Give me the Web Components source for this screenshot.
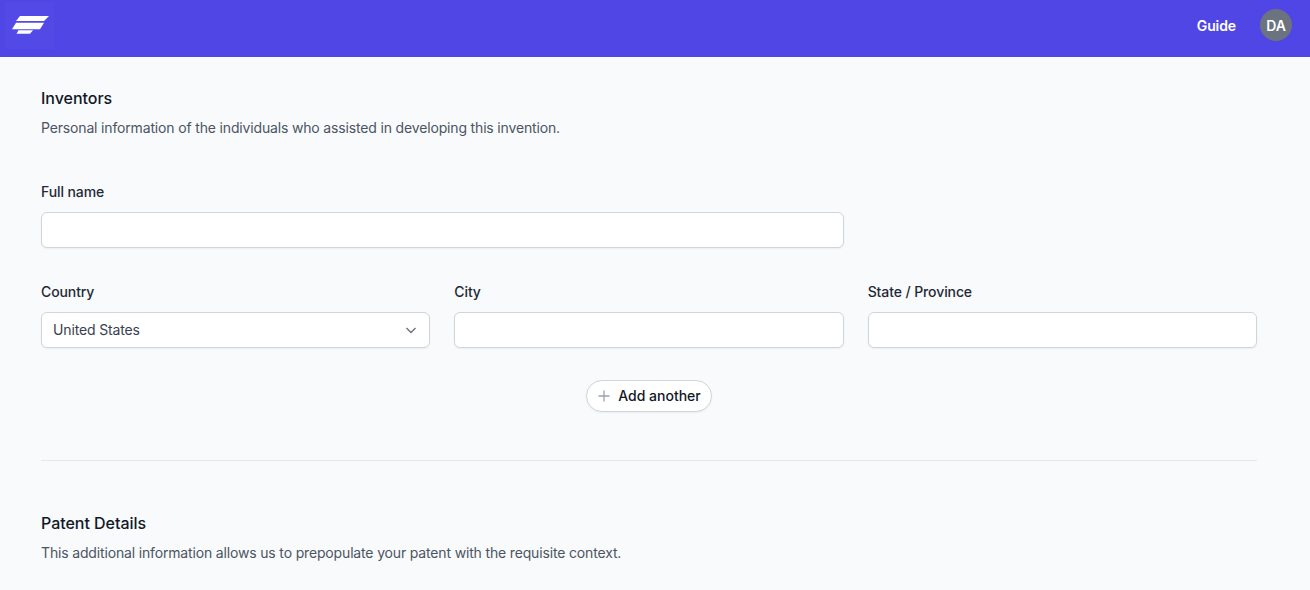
<!DOCTYPE html>
<html>
<head>
<meta charset="utf-8">
<style>
html, body { margin: 0; padding: 0; height: 100%; overflow: hidden; background: #f9fafb; font-family: Inter, "Liberation Sans", sans-serif; }
</style>
</head>
<body>
<app-header></app-header>
<main-area>
    <form-section heading="Inventors" text="Personal information of the individuals who assisted in developing this invention.">
        <form-grid>
            <form-field label="Full name" style="grid-column: span 2"></form-field>
            <span></span>
            <form-field label="Country" value="United States" select></form-field>
            <form-field label="City"></form-field>
            <form-field label="State / Province"></form-field>
        </form-grid>
        <add-button>Add another</add-button>
    </form-section>
    <form-section divided heading="Patent Details" text="This additional information allows us to prepopulate your patent with the requisite context."></form-section>
</main-area>

<script>
class AppHeader extends HTMLElement {
    constructor() {
        super();
        this.attachShadow({ mode: 'open' });
    }
    connectedCallback() {
        this.shadowRoot.innerHTML = `
            <style>
                :host {
                    display: flex;
                    align-items: flex-start;
                    justify-content: space-between;
                    height: 57px;
                    background: #4f46e5;
                    padding: 2px 18px 0 5px;
                    box-sizing: border-box;
                }
                .logo {
                    display: flex;
                    width: 49px;
                    height: 47px;
                    background: #5249e6;
                }
                .right { display: flex; align-items: center; gap: 24px; margin-top: 7px; }
                a { color: #fff; font-size: 14px; font-weight: 600; letter-spacing: -0.1px; text-decoration: none; }
                .avatar {
                    width: 32px;
                    height: 32px;
                    border-radius: 50%;
                    background: #6b7280;
                    color: #fff;
                    font-size: 14px;
                    font-weight: 600;
                    display: flex;
                    align-items: center;
                    justify-content: center;
                }
            </style>
            <div class="logo">
                <svg width="49" height="47" viewBox="0 0 49 47">
                    <polygon fill="#fff" points="15,14 44,14 39,19 11,19"/>
                    <polygon fill="#fff" points="11,20.700 39,20.700 35,27.300 7,27.300"/>
                    <polygon fill="#fff" points="13.500,28.300 28,28.300 25,31.700 11.500,31.700"/>
                </svg>
            </div>
            <div class="right">
                <a href="#guide">Guide</a>
                <div class="avatar">DA</div>
            </div>
        `;
    }
}

class MainArea extends HTMLElement {
    constructor() {
        super();
        this.attachShadow({ mode: 'open' });
    }
    connectedCallback() {
        this.shadowRoot.innerHTML = `
            <style>
                :host { display: block; padding: 32px 53px 0 41px; }
            </style>
            <slot></slot>
        `;
    }
}

class FormSection extends HTMLElement {
    constructor() {
        super();
        this.attachShadow({ mode: 'open' });
    }
    connectedCallback() {
        this.shadowRoot.innerHTML = `
            <style>
                :host { display: block; }
                :host([divided]) { border-top: 1px solid #e5e7eb; margin-top: 48px; padding-top: 53px; }
                h2 { margin: 0; font-size: 16px; line-height: 18px; font-weight: 500; color: #111827; letter-spacing: -0.03px; }
                p { margin: 11px 0 0; font-size: 14px; line-height: 20px; color: #4b5563; letter-spacing: -0.16px; }
            </style>
            <h2></h2>
            <p></p>
            <slot></slot>
        `;
        this.shadowRoot.querySelector('h2').textContent = this.getAttribute('heading');
        this.shadowRoot.querySelector('p').textContent = this.getAttribute('text');
    }
}

class FormGrid extends HTMLElement {
    constructor() {
        super();
        this.attachShadow({ mode: 'open' });
    }
    connectedCallback() {
        this.shadowRoot.innerHTML = `
            <style>
                :host {
                    display: grid;
                    grid-template-columns: repeat(3, 1fr);
                    column-gap: 24px;
                    row-gap: 34px;
                    margin-top: 44px;
                }
            </style>
            <slot></slot>
        `;
    }
}

class FormField extends HTMLElement {
    constructor() {
        super();
        this.attachShadow({ mode: 'open' });
    }
    connectedCallback() {
        const isSelect = this.hasAttribute('select');
        this.shadowRoot.innerHTML = `
            <style>
                :host { display: block; }
                label { display: block; font-size: 14px; line-height: 20px; font-weight: 500; color: #1f2937; letter-spacing: -0.1px; margin-bottom: 10px; }
                .box {
                    display: flex;
                    align-items: center;
                    justify-content: space-between;
                    box-sizing: border-box;
                    height: 36px;
                    padding: 0 12px 0 11px;
                    background: #fff;
                    border: 1px solid #d1d5db;
                    border-radius: 6px;
                    box-shadow: 0 1px 2px rgba(0, 0, 0, 0.05);
                    font-size: 14px;
                    letter-spacing: -0.15px;
                    color: #374151;
                }
                .value { margin-bottom: 2px; }
            </style>
            <label></label>
            <div class="box">
                <span class="value"></span>
                ${isSelect ? '<svg width="12" height="12" viewBox="0 0 12 12" fill="none" stroke="#6b7280" stroke-width="1.4"><path d="M1.500 4 L6 8.500 L10.500 4"/></svg>' : ''}
            </div>
        `;
        this.shadowRoot.querySelector('label').textContent = this.getAttribute('label');
        this.shadowRoot.querySelector('.value').textContent = this.getAttribute('value') || '';
    }
}

class AddButton extends HTMLElement {
    constructor() {
        super();
        this.attachShadow({ mode: 'open' });
    }
    connectedCallback() {
        this.shadowRoot.innerHTML = `
            <style>
                :host { display: flex; justify-content: center; margin-top: 32px; }
                button {
                    display: flex;
                    align-items: center;
                    gap: 8px;
                    height: 32px;
                    padding: 0 10px 0 11px;
                    background: #fff;
                    border: 1px solid #d1d5db;
                    border-radius: 16px;
                    box-shadow: 0 1px 2px rgba(0, 0, 0, 0.05);
                    font: 500 14px Inter, "Liberation Sans", sans-serif;
                    color: #111827;
                }
                span { margin-bottom: 2px; }
            </style>
            <button>
                <svg width="12" height="12" viewBox="0 0 12 12" stroke="#9ca3af" stroke-width="1.3"><path d="M6 0.500 V11.500 M0.500 6 H11.500"/></svg>
                <span><slot></slot></span>
            </button>
        `;
    }
}

customElements.define('app-header', AppHeader);
customElements.define('main-area', MainArea);
customElements.define('form-section', FormSection);
customElements.define('form-grid', FormGrid);
customElements.define('form-field', FormField);
customElements.define('add-button', AddButton);
</script>
</body>
</html>
